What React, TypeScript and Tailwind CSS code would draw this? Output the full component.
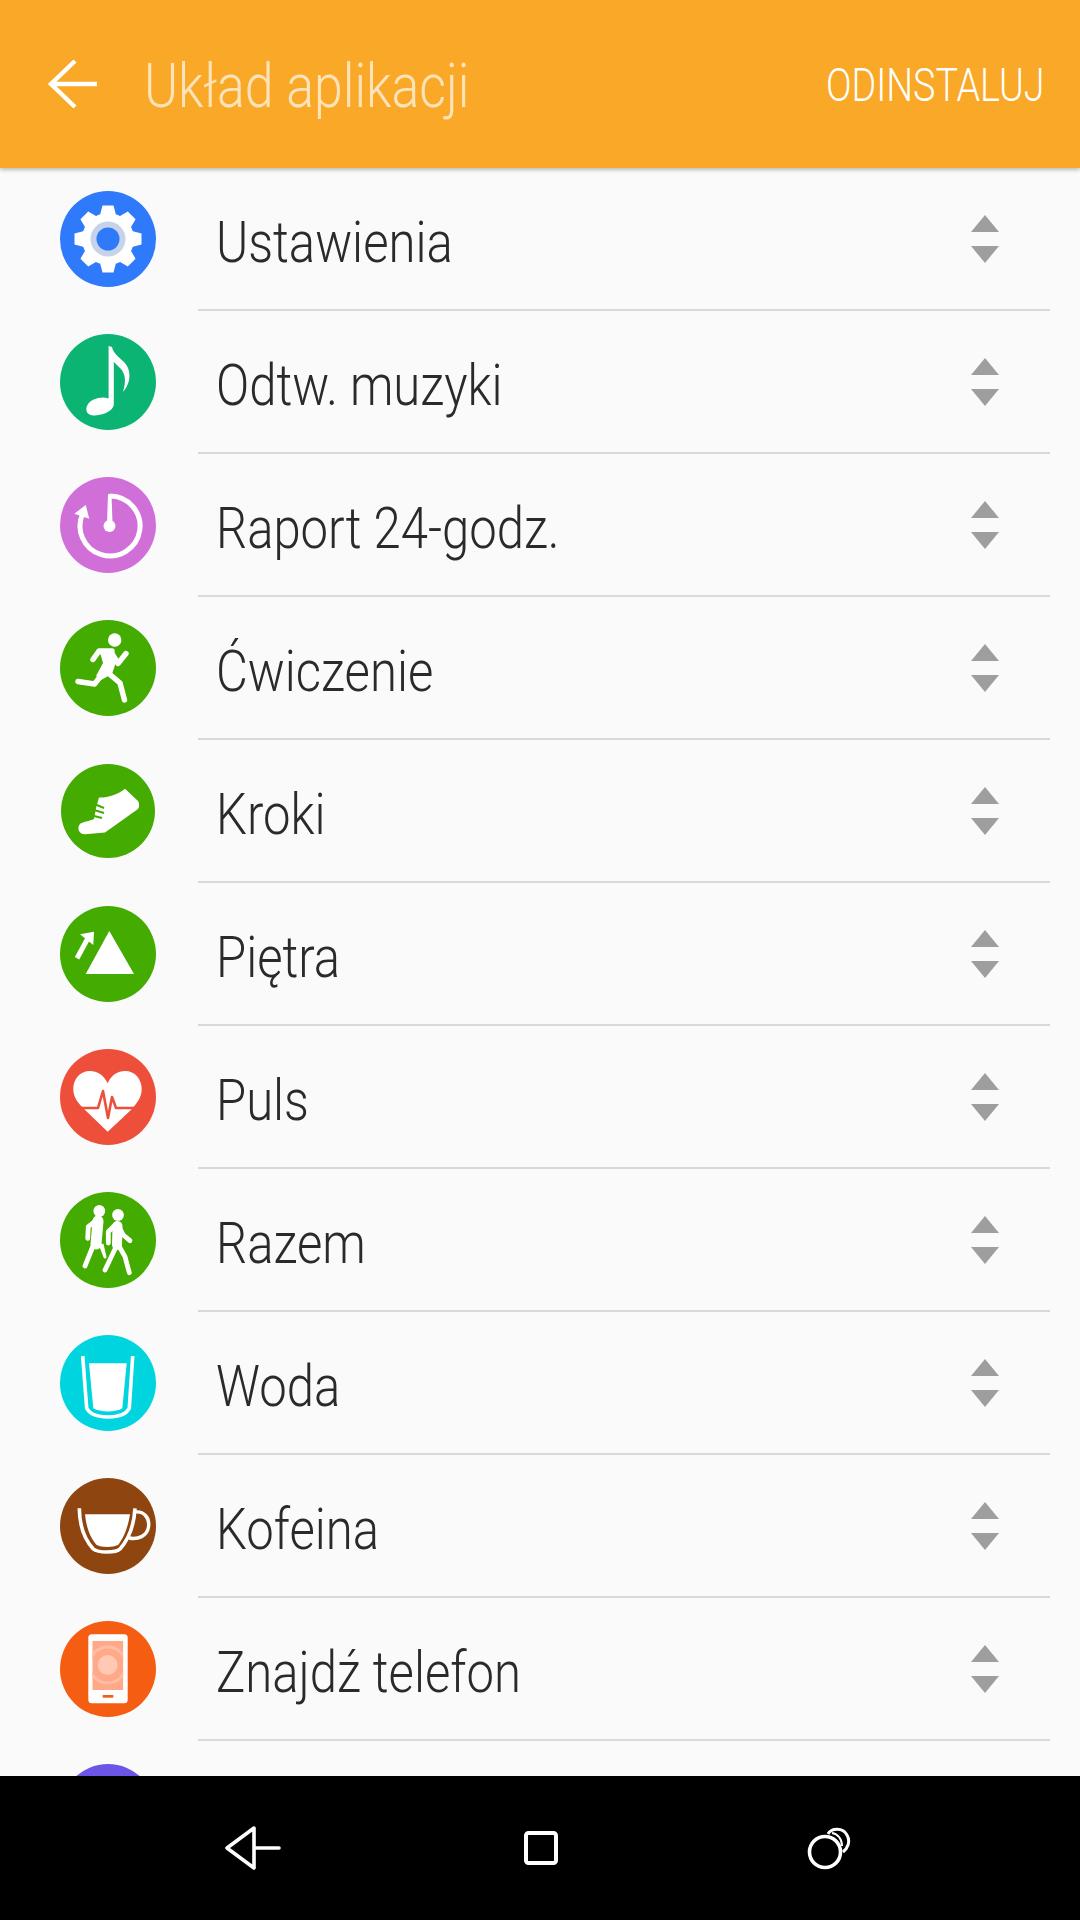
import React from "react";

const W = "#ffffff";

function Gear() {
  const angles = [0, 45, 90, 135, 180, 225, 270, 315];
  return (
    <>
      <circle cx="48" cy="48" r="48" fill="#2f79fb" />
      <circle cx="48" cy="48" r="26" fill={W} />
      {angles.map((a) => (
        <path key={a} d="M39.5 26 L42.5 14.5 L53.5 14.5 L56.5 26 Z" fill={W} transform={`rotate(${a} 48 48)`} />
      ))}
      <circle cx="48" cy="48" r="17.5" fill="#c6d3ea" />
      <circle cx="48" cy="48" r="11.5" fill="#2f79fb" />
    </>
  );
}

function Music() {
  return (
    <>
      <circle cx="48" cy="48" r="48" fill="#0cb473" />
      <path d="M48.6 12 L52 13 C53 19 59 23 64 28 C71 35 72 48 63 58 C66 48 66 40 60 34 C57 31 55 29 53.8 28 L53.8 70 C53.8 76 45 81 35 81.5 C27 82 24.5 76 27.5 71 C31 65 41 62 48.6 64.5 Z" fill={W} />
    </>
  );
}

function Report() {
  return (
    <>
      <circle cx="48" cy="48" r="48" fill="#d16fd9" />
      <path d="M50 19 A30 30 0 1 1 23 36" fill="none" stroke={W} strokeWidth="5" />
      <path d="M25.7 28 L14.3 36.7 L29.3 41.7 Z" fill={W} />
      <path d="M48 17 L51.5 17 L52.5 46 L47 46 Z" fill={W} />
      <circle cx="49.5" cy="49" r="6" fill={W} />
    </>
  );
}

function Run() {
  return (
    <>
      <circle cx="48" cy="48" r="48" fill="#44ab00" />
      <circle cx="54.7" cy="20" r="6.7" fill={W} />
      <path d="M52 31 L39 31 L33 39.5" fill="none" stroke={W} strokeWidth="5.4" strokeLinecap="round" strokeLinejoin="round" />
      <path d="M51 32 L58 43.5 L66 33.5" fill="none" stroke={W} strokeWidth="5.4" strokeLinecap="round" strokeLinejoin="round" />
      <path d="M38 29 L52 29 L56 42 L52 54 L41 60 L36 56 L43 43 L41 36 Z" fill={W} />
      <path d="M44 52 L34.5 64 L18 61.5" fill="none" stroke={W} strokeWidth="5.4" strokeLinecap="round" strokeLinejoin="round" />
      <path d="M47 52 L60 63 L64.5 80" fill="none" stroke={W} strokeWidth="5.4" strokeLinecap="round" strokeLinejoin="round" />
    </>
  );
}

function Shoe() {
  return (
    <>
      <circle cx="48" cy="48" r="47" fill="#44ab00" />
      <path d="M65 25.7 L78 38 C79.5 40 79.5 44 78 46 L45 69.5 L25 71.3 C19 71.5 16.5 65 20 61 C22 59 30 58 34 56 L36 45 L39 34.5 C46 35 58 32 65 25.7 Z" fill={W} />
      <path d="M35.5 41.5 L44 45 M34 47 L44 50 M32 52.5 L42 55" stroke="#44ab00" strokeWidth="2" fill="none" />
    </>
  );
}

function Floors() {
  return (
    <>
      <circle cx="48" cy="48" r="48" fill="#44ab00" />
      <path d="M49.3 25 L74 68 L25.7 68 Z" fill={W} />
      <path d="M34 25.7 L20 28.3 L33.3 39 Z" fill={W} />
      <path d="M27.5 33 L17 52.3" stroke={W} strokeWidth="5" fill="none" />
    </>
  );
}

function Heart() {
  return (
    <>
      <circle cx="48" cy="48" r="48" fill="#ee4f3b" />
      <path d="M47.7 34.3 C44 26 37 22 30 22 C20 22 13.3 30 13.3 40 C13.3 49 19 55 24 60 L47.7 82.7 L72 60 C76 55 81.7 49 81.7 40 C81.7 30 75 22 65 22 C58 22 51 26 47.7 34.3 Z" fill={W} />
      <path d="M20 59 L38 59 L43 42 L48 69 L52 48 L56 59 L78 59" fill="none" stroke="#ee4f3b" strokeWidth="2.6" strokeLinejoin="round" />
    </>
  );
}

function Together() {
  const g = "#44ab00";
  const p2 = [
    "M56 32 L48.3 39.7 L48.3 51",
    "M58 33 L63.3 43 L70 48.7",
    "M55 57 L45 78",
    "M59 54 L65 64.7 L69.3 80.7",
  ];
  return (
    <>
      <circle cx="48" cy="48" r="48" fill={g} />
      <circle cx="39.3" cy="19" r="5.9" fill={W} />
      <path d="M37 28 L28.3 34.7 L27.7 46.3" fill="none" stroke={W} strokeWidth="4.8" strokeLinecap="round" strokeLinejoin="round" />
      <path d="M38 29 L36 52" fill="none" stroke={W} strokeWidth="11" strokeLinecap="round" />
      <path d="M33 54 L25 74" fill="none" stroke={W} strokeWidth="4.8" strokeLinecap="round" />
      <path d="M40 52 L45 65 L42 52" fill={W} stroke={W} strokeWidth="3" strokeLinejoin="round" />
      <path d="M57.5 32 L57 54" fill="none" stroke={g} strokeWidth="15" strokeLinecap="round" />
      <circle cx="58" cy="23" r="5.9" fill={W} />
      <path d="M57.5 34 L57 53" fill="none" stroke={W} strokeWidth="10" strokeLinecap="round" />
      {p2.map((d) => (
        <path key={d} d={d} fill="none" stroke={W} strokeWidth="4.8" strokeLinecap="round" strokeLinejoin="round" />
      ))}
    </>
  );
}

function Water() {
  return (
    <>
      <circle cx="48" cy="48" r="48" fill="#00d5df" />
      <path d="M22.7 21 L26.7 73.3 C30 80 40 82 48.3 82 C56 82 66 80 69.3 73.3 L72.7 21" fill="none" stroke={W} strokeWidth="3.6" />
      <path d="M29 28.3 L66.7 28.3 L62.3 73.3 C56 77.5 40 77.5 33.3 73.3 Z" fill={W} />
    </>
  );
}

function Coffee() {
  return (
    <>
      <circle cx="48" cy="48" r="48" fill="#8e450f" />
      <path d="M19.3 30.3 C19.5 48 25 62 33.3 71 C38 75 56 75 60 71 C68 62 74 48 75 30.3" fill="none" stroke={W} strokeWidth="3.6" />
      <path d="M25 36.3 L70 36.3 C68 50 63 61 58 67 C53 69.5 41 69.5 36.7 67 C30 60 26 48 25 36.3 Z" fill={W} />
      <path d="M75 34 C84 33 90 40 88.5 49 C87 58 78 62 69 60" fill="none" stroke={W} strokeWidth="3.4" />
    </>
  );
}

function Phone() {
  return (
    <>
      <circle cx="48" cy="48" r="48" fill="#f55d13" />
      <rect x="28.3" y="13.3" width="39.4" height="69" rx="3.5" fill={W} />
      <svg x="32.3" y="19.7" width="31" height="49.3" viewBox="32.3 19.7 31 49.3">
        <rect x="32.3" y="19.7" width="31" height="49.3" fill="#ffa988" />
        <circle cx="47.7" cy="44" r="18" fill="none" stroke="#ffbda3" strokeWidth="3" />
        <circle cx="47.7" cy="44" r="10" fill="#ffc9b3" />
      </svg>
      <rect x="42.7" y="74" width="10.6" height="2.7" fill="#f55d13" />
    </>
  );
}

const apps: { name: string; Icon: () => React.ReactElement }[] = [
  { name: "Ustawienia", Icon: Gear },
  { name: "Odtw. muzyki", Icon: Music },
  { name: "Raport 24-godz.", Icon: Report },
  { name: "Ćwiczenie", Icon: Run },
  { name: "Kroki", Icon: Shoe },
  { name: "Piętra", Icon: Floors },
  { name: "Puls", Icon: Heart },
  { name: "Razem", Icon: Together },
  { name: "Woda", Icon: Water },
  { name: "Kofeina", Icon: Coffee },
  { name: "Znajdź telefon", Icon: Phone },
];

function Sort() {
  return (
    <svg width="30" height="48" viewBox="0 0 30 48" className="mr-[50px] shrink-0">
      <path d="M15 0 L29 17 L1 17 Z" fill="#9e9e9e" />
      <path d="M1 31 L29 31 L15 48 Z" fill="#9e9e9e" />
    </svg>
  );
}

function Row({ name, Icon }: { name: string; Icon: () => React.ReactElement }) {
  return (
    <div className="flex h-[143px] shrink-0">
      <div className="flex w-[198px] shrink-0 items-start pl-[60px] pt-[23px]">
        <svg width="96" height="96" viewBox="0 0 96 96">
          <Icon />
        </svg>
      </div>
      <div className="mr-[30px] flex flex-1 items-center justify-between border-b-2 border-[#d9d9d9] pl-[18px]">
        <span className="origin-left translate-y-[4px] scale-x-[0.86] font-['Roboto',sans-serif] text-[57px] leading-none font-light whitespace-nowrap text-[#2a2a2a]">
          {name}
        </span>
        <Sort />
      </div>
    </div>
  );
}

export default function App() {
  return (
    <div className="flex h-[1920px] w-[1080px] flex-col overflow-hidden bg-[#fafafa]">
      <header className="relative z-10 flex h-[168px] shrink-0 items-center bg-[#faa827] shadow-[0_2px_4px_rgba(0,0,0,0.25)]">
        <svg width="54" height="52" viewBox="0 0 54 52" className="ml-[46px] shrink-0">
          <path d="M29 3 L5 26 L29 49 M5 26 L51 26" fill="none" stroke={W} strokeWidth="4.4" />
        </svg>
        <span className="ml-[44px] origin-left translate-y-[2px] scale-x-[0.85] font-['Roboto',sans-serif] text-[61px] leading-none font-light whitespace-nowrap text-[#fde3b9]">
          Układ aplikacji
        </span>
        <span className="mr-[35px] ml-auto origin-right translate-y-[1px] scale-x-[0.82] font-['Roboto',sans-serif] text-[46px] leading-none font-light whitespace-nowrap text-white">
          ODINSTALUJ
        </span>
      </header>
      <main className="flex min-h-0 flex-1 flex-col overflow-hidden">
        {apps.map((a) => (
          <Row key={a.name} name={a.name} Icon={a.Icon} />
        ))}
        <div className="flex h-[143px] shrink-0 pl-[60px] pt-[23px]">
          <div className="h-[96px] w-[96px] rounded-full bg-[#6a55e6]" />
        </div>
      </main>
      <nav className="flex h-[144px] shrink-0 items-center bg-black pl-[224px]">
        <svg width="58" height="44" viewBox="0 0 58 44" className="shrink-0">
          <path d="M30 2 L3 22 L30 42 Z M30 22 L55 22" fill="none" stroke={W} strokeWidth="3.6" strokeLinejoin="round" strokeLinecap="round" />
        </svg>
        <svg width="34" height="34" viewBox="0 0 34 34" className="ml-[242px] shrink-0">
          <rect x="2" y="2" width="30" height="30" rx="2.5" fill="none" stroke={W} strokeWidth="4" />
        </svg>
        <svg width="44" height="44" viewBox="0 0 44 44" className="ml-[249px] shrink-0">
          <circle cx="18" cy="26" r="15.5" fill="none" stroke={W} strokeWidth="3.6" />
          <path d="M21 8 C24 2 36 1 40 9 C44 16 40 23 36 26" fill="none" stroke={W} strokeWidth="3" />
          <path d="M25 7 C31 8 35 13 35 20" fill="none" stroke={W} strokeWidth="2" />
        </svg>
      </nav>
    </div>
  );
}
